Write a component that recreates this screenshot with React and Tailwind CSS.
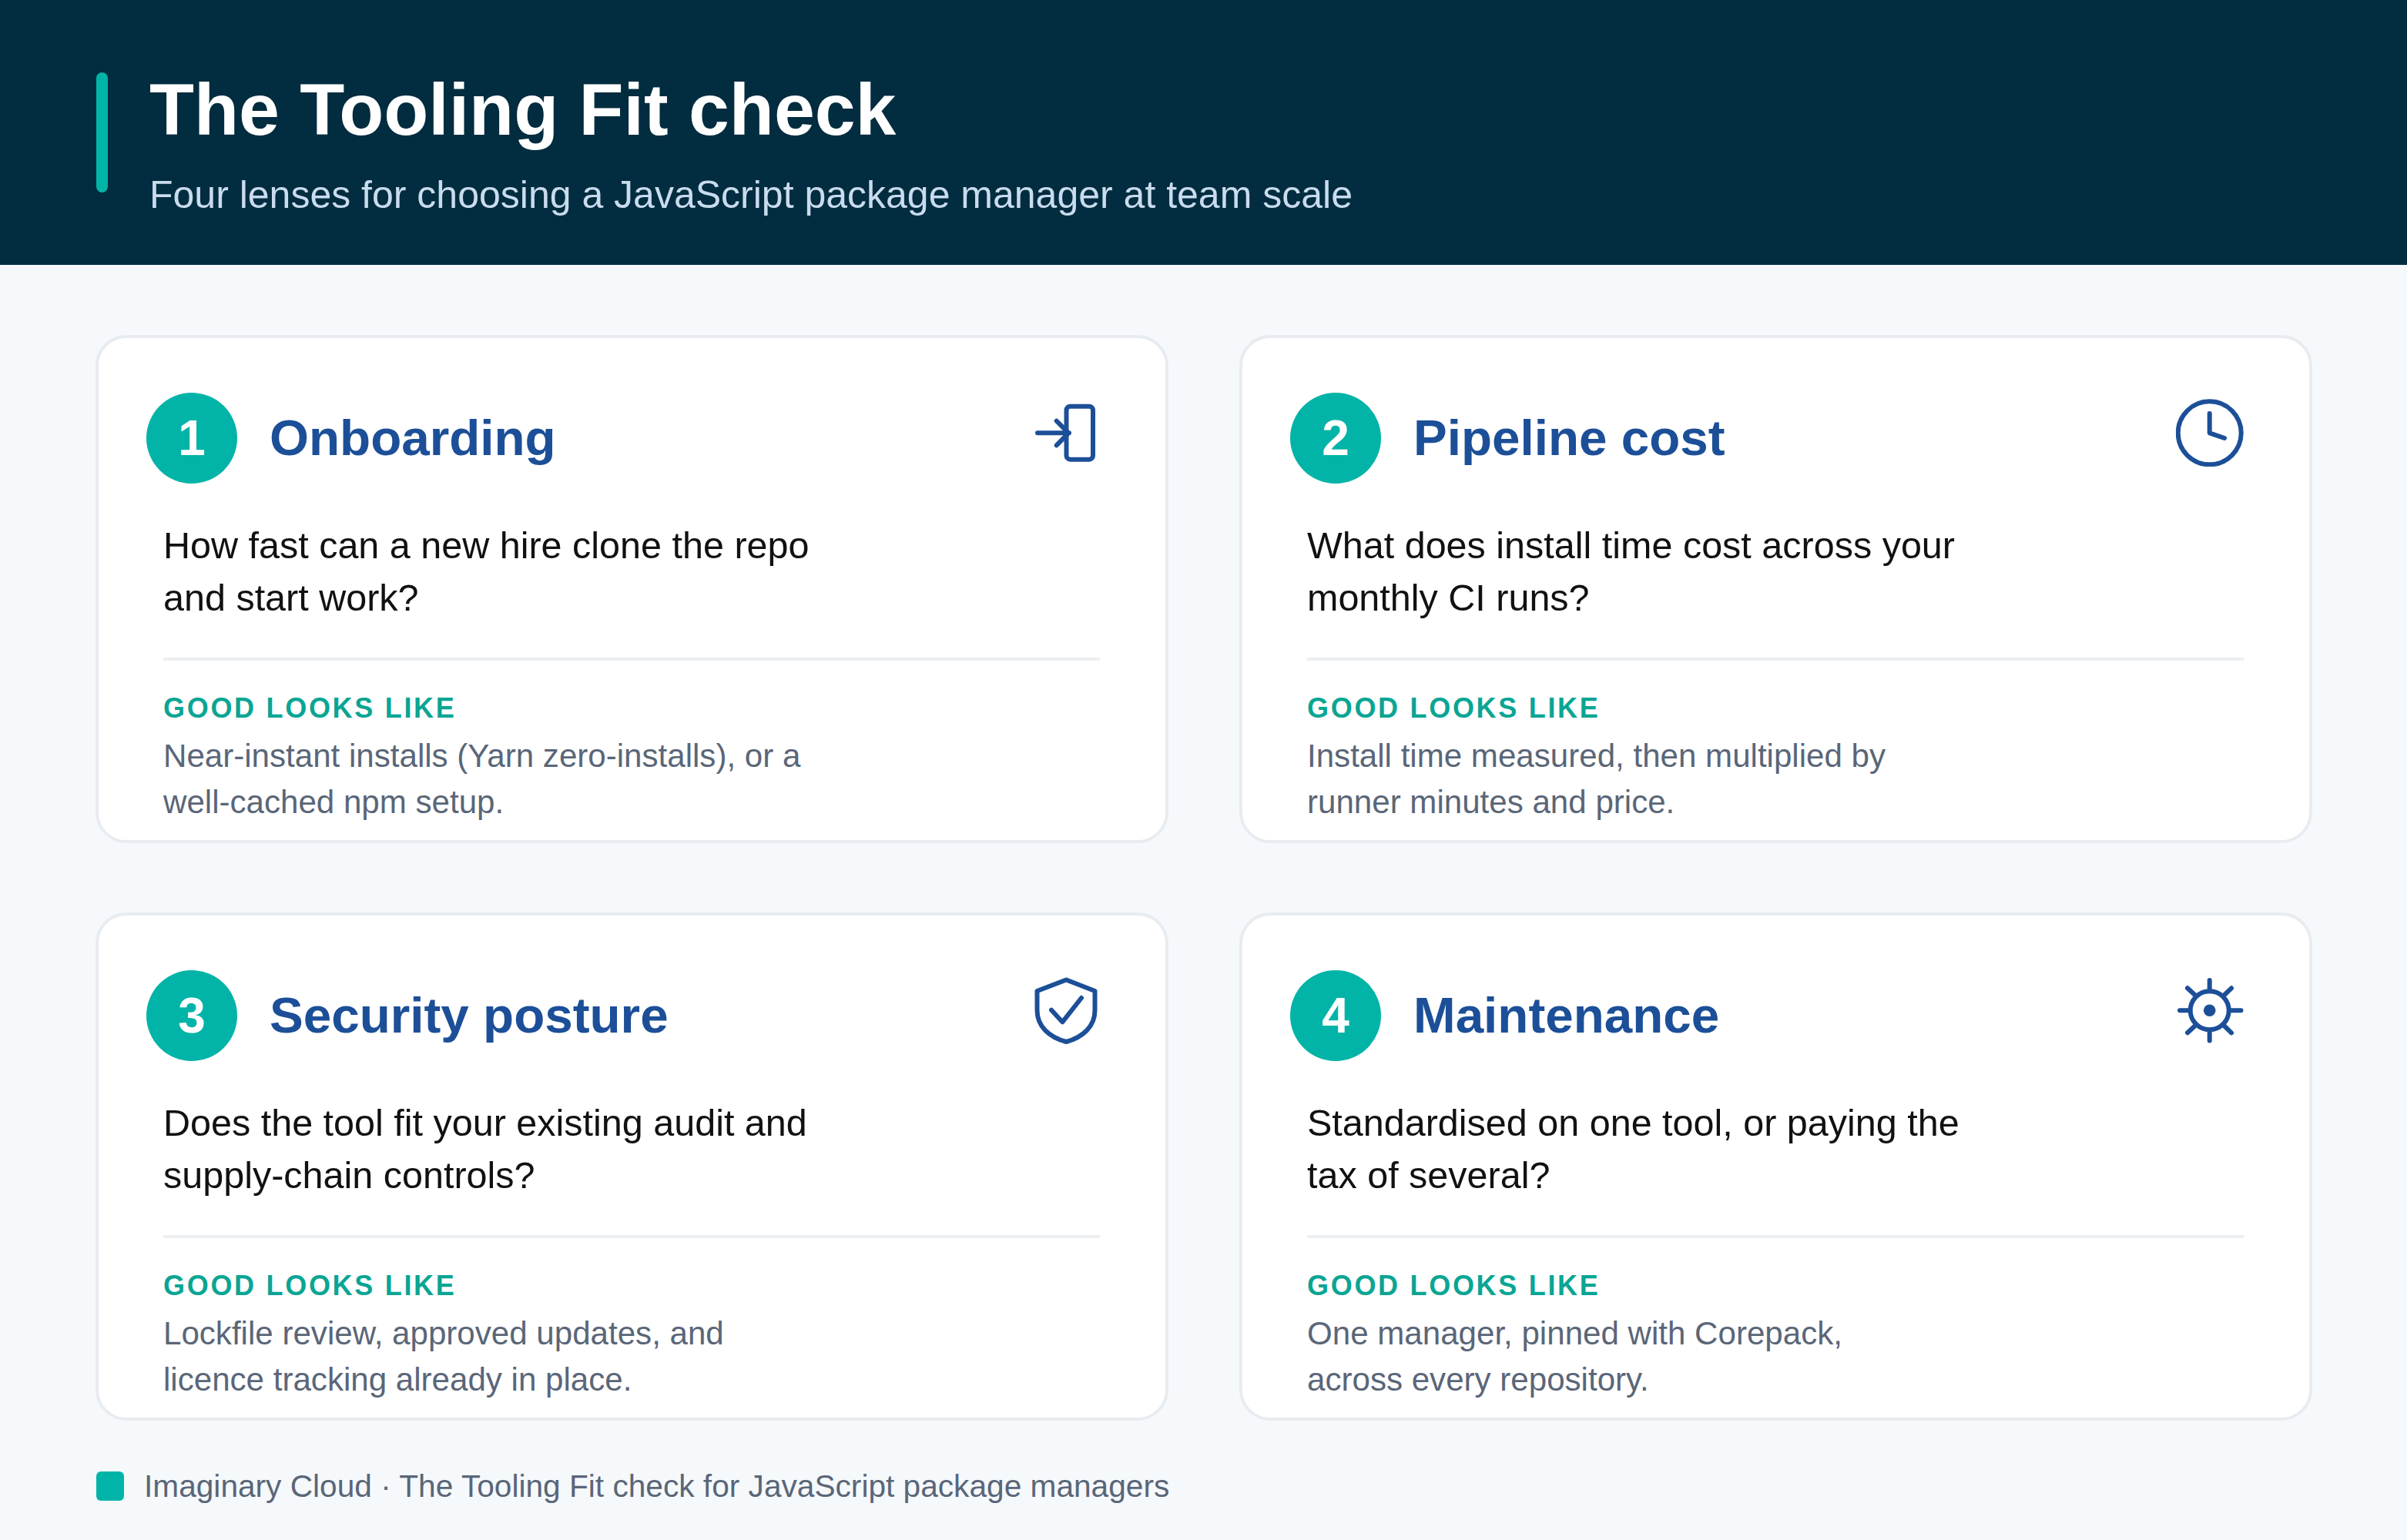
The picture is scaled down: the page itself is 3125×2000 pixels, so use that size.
const cards = [
  { n: "1", title: "Onboarding", q: ["How fast can a new hire clone the repo", "and start work?"], d: ["Near-instant installs (Yarn zero-installs), or a", "well-cached npm setup."], icon: "door" },
  { n: "2", title: "Pipeline cost", q: ["What does install time cost across your", "monthly CI runs?"], d: ["Install time measured, then multiplied by", "runner minutes and price."], icon: "clock" },
  { n: "3", title: "Security posture", q: ["Does the tool fit your existing audit and", "supply-chain controls?"], d: ["Lockfile review, approved updates, and", "licence tracking already in place."], icon: "shield" },
  { n: "4", title: "Maintenance", q: ["Standardised on one tool, or paying the", "tax of several?"], d: ["One manager, pinned with Corepack,", "across every repository."], icon: "gear" },
];

function Icon({ kind }) {
  const common = { width: 88, height: 88, viewBox: "0 0 88 88", fill: "none", stroke: "#1c4f98", strokeWidth: 6, strokeLinecap: "round", strokeLinejoin: "round" };
  if (kind === "door") return (
    <svg {...common}>
      <rect x="44.5" y="9.7" width="34.5" height="69" rx="5" />
      <path d="M7 44.3H48M31.7 28.7L47.3 44.3L31.7 60.3" />
    </svg>
  );
  if (kind === "clock") return (
    <svg {...common}>
      <circle cx="43.7" cy="44.3" r="41" />
      <path d="M43.7 19V44.3L63 51" />
    </svg>
  );
  if (kind === "shield") return (
    <svg {...common}>
      <path d="M44.3 4.5L81.5 19V44C81.5 65 66 79 44.3 85C22 79 6.5 65 6.5 44V19Z" />
      <path d="M25 43.7L39.3 59.3L64 28" />
    </svg>
  );
  return (
    <svg {...common}>
      <circle cx="43.7" cy="44.3" r="25" />
      <circle cx="43.7" cy="44.3" r="7.8" fill="#1c4f98" stroke="none" />
      <path d="M43.7 5V18M43.7 70.5V83.5M5 44.3H18M69.5 44.3H84.5M15 15.3L25 24.5M72 15.3L62.5 24.5M15 73.3L25 64M72 73.3L62.5 64" />
    </svg>
  );
}

function Card({ c }) {
  return (
    <div className="h-[660px] rounded-[40px] border-[4px] border-[#e8ecf0] bg-white pt-[71px] pl-[62.5px] pr-[85px]">
      <div className="flex items-start">
        <div className="flex h-[118px] w-[118px] shrink-0 items-center justify-center rounded-full bg-[#02b4a7] text-[64px] font-bold text-white">{c.n}</div>
        <div className="ml-[42px] flex h-[118px] items-center text-[65.6px] font-bold leading-none text-[#1c4f98]">{c.title}</div>
        <div className="ml-auto mt-[8px]"><Icon kind={c.icon} /></div>
      </div>
      <div className="mt-[46px] ml-[22px] text-[48.5px] leading-[68px] text-[#111111]">
        {c.q.map((l) => <div key={l}>{l}</div>)}
      </div>
      <div className="mt-[44px] ml-[22px] h-[4px] bg-[#eceff2]" />
      <div className="mt-[41.5px] ml-[22px] text-[36px] font-bold leading-[40px] tracking-[2.7px] text-[#0aa594]">GOOD LOOKS LIKE</div>
      <div className="mt-[12.5px] ml-[22px] text-[42.1px] leading-[60px] text-[#5a6678]">
        {c.d.map((l) => <div key={l}>{l}</div>)}
      </div>
    </div>
  );
}

export default function App() {
  return (
    <div className="flex h-[2000px] w-[3125px] flex-col bg-[#f5f9fc] font-['Liberation_Sans',sans-serif]">
      <header className="flex h-[344px] items-center gap-[54px] bg-[#022c3f] pl-[125px]">
        <div className="h-[156px] w-[15px] rounded-full bg-[#02b4a7]" />
        <div className="mt-[26px]">
          <h1 className="text-[95px] font-bold leading-[110px] text-white">The Tooling Fit check</h1>
          <p className="mt-[26px] text-[50px] leading-[60px] text-[#c9dcee]">Four lenses for choosing a JavaScript package manager at team scale</p>
        </div>
      </header>
      <main className="grid grid-cols-2 gap-x-[92px] gap-y-[90px] px-[123.5px] pt-[91px]">
        {cards.map((c) => <Card key={c.n} c={c} />)}
      </main>
      <footer className="mt-[60px] flex items-center gap-[26px] pl-[125px]">
        <div className="h-[38px] w-[36px] rounded-[6px] bg-[#02b4a7]" />
        <div className="text-[40.65px] leading-[50px] text-[#5a6678]">Imaginary Cloud · The Tooling Fit check for JavaScript package managers</div>
      </footer>
    </div>
  );
}
